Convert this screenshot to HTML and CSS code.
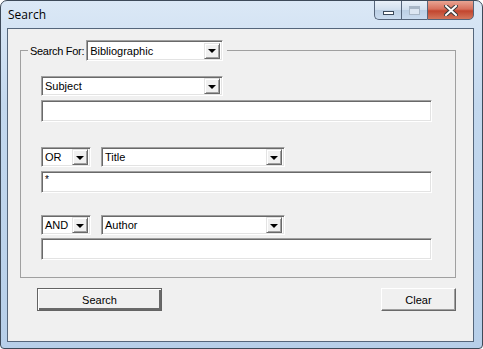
FILE: index.html
```html
<!DOCTYPE html>
<html lang="en">
<head>
    <meta charset="UTF-8">
    <title>Search</title>
    <link rel="stylesheet" href="styles.css">
</head>
<body>
    <div class="window">
        <div class="titlebar">
            <span class="title">Search</span>
            <div class="caption-buttons">
                <div class="cap-btn cap-min"><span class="min-glyph"></span></div>
                <div class="cap-btn cap-max"><span class="max-glyph"></span></div>
                <div class="cap-btn cap-close">
                    <svg width="14" height="11" viewBox="0 0 14 11">
                        <path d="M2 1 L12 10 M12 1 L2 10" stroke="#3b3b3b" stroke-width="4" stroke-linecap="square"/>
                        <path d="M2 1 L12 10 M12 1 L2 10" stroke="#fff" stroke-width="2" stroke-linecap="square"/>
                    </svg>
                </div>
            </div>
        </div>

        <div class="client">
            <div class="group">
                <div class="legend">
                    <span class="legend-label">Search For:</span>
                    <div class="combo combo-bib">
                        <span class="combo-text">Bibliographic</span>
                        <span class="drop-btn"><span class="arrow"></span></span>
                    </div>
                </div>

                <div class="row row-first">
                    <div class="combo combo-field">
                        <span class="combo-text">Subject</span>
                        <span class="drop-btn"><span class="arrow"></span></span>
                    </div>
                </div>
                <div class="textbox"></div>

                <div class="row row-gap">
                    <div class="combo combo-op">
                        <span class="combo-text">OR</span>
                        <span class="drop-btn"><span class="arrow"></span></span>
                    </div>
                    <div class="combo combo-wide">
                        <span class="combo-text">Title</span>
                        <span class="drop-btn"><span class="arrow"></span></span>
                    </div>
                </div>
                <div class="textbox"><span class="textbox-text">*</span></div>

                <div class="row row-gap2">
                    <div class="combo combo-op">
                        <span class="combo-text">AND</span>
                        <span class="drop-btn"><span class="arrow"></span></span>
                    </div>
                    <div class="combo combo-wide">
                        <span class="combo-text">Author</span>
                        <span class="drop-btn"><span class="arrow"></span></span>
                    </div>
                </div>
                <div class="textbox textbox-last"></div>
            </div>

            <div class="actions">
                <button class="btn btn-default">Search</button>
                <button class="btn btn-clear">Clear</button>
            </div>
        </div>
    </div>
</body>
</html>
```

FILE: styles.css
```css
* {
    margin: 0;
    padding: 0;
    box-sizing: border-box;
}

body {
    font-family: "Liberation Sans", Arial, sans-serif;
    font-size: 11px;
    color: #000;
    background: #fff;
}

.window {
    width: 483px;
    height: 349px;
    border: 1px solid #3e4a59;
    border-radius: 7px 7px 4px 4px;
    background: linear-gradient(180deg, #dbe8f6 0%, #c3d8ee 30%, #b7cfe9 100%);
    overflow: hidden;
}

.titlebar {
    height: 27px;
    display: flex;
    justify-content: space-between;
    align-items: flex-start;
}

.title {
    font-family: "Open Sans", "Noto Sans", sans-serif;
    font-size: 12px;
    margin: 5px 0 0 7px;
    color: #000;
}

.caption-buttons {
    display: flex;
    margin-right: 8px;
    margin-top: -1px;
}

.cap-btn {
    height: 20px;
    border: 1px solid #56657a;
    display: flex;
    align-items: center;
    justify-content: center;
}

.cap-min {
    width: 27px;
    border-radius: 0 0 0 5px;
    border-right: none;
    background: linear-gradient(180deg, #e9f0f8 0%, #d1dfee 50%, #bccfe4 51%, #c9dbef 100%);
}

.cap-max {
    width: 26px;
    border-right: none;
    background: linear-gradient(180deg, #e9f0f8 0%, #d1dfee 50%, #bccfe4 51%, #c9dbef 100%);
}

.cap-close {
    width: 47px;
    border-radius: 0 0 5px 0;
    background: linear-gradient(180deg, #e8a493 0%, #d7705c 45%, #c2452e 55%, #d3765c 100%);
}

.min-glyph {
    width: 11px;
    height: 4px;
    margin-top: 5px;
    background: #fff;
    border: 1px solid #3c4a5c;
}

.max-glyph {
    width: 11px;
    height: 9px;
    border: 1px solid #a8b6c6;
    box-shadow: inset 0 2px 0 #a8b6c6;
    background: #dce6f2;
}

.client {
    margin: 0 8px 0 6px;
    height: 314px;
    border: 1px solid #55667b;
    background: #f0f0f0;
}

.group {
    margin: 21px 17px 0 12px;
    border: 1px solid #a0a0a0;
    padding: 0 0 17px 20px;
}

.legend {
    display: flex;
    align-items: center;
    gap: 2px;
    width: max-content;
    height: 21px;
    margin: -11px 0 0 -13px;
    padding: 0 4px 0 2px;
    background: #f0f0f0;
}

.legend-label {
    white-space: nowrap;
    letter-spacing: -0.3px;
}

.combo {
    display: flex;
    align-items: center;
    justify-content: space-between;
    height: 20px;
    background: #fff;
    border: 1px solid;
    border-color: #a0a0a0 #fff #fff #a0a0a0;
    box-shadow: inset 1px 1px 0 #696969, inset -1px -1px 0 #e3e3e3;
    padding: 2px 2px 2px 3px;
}

.combo-bib {
    width: 137px;
    height: 21px;
}

.combo-field {
    width: 182px;
}

.combo-op {
    width: 50px;
}

.combo-wide {
    width: 184px;
}

.combo-text {
    white-space: nowrap;
}

.drop-btn {
    width: 16px;
    height: 16px;
    background: #f0f0f0;
    border: 1px solid;
    border-color: #e3e3e3 #696969 #696969 #e3e3e3;
    box-shadow: inset 1px 1px 0 #fff, inset -1px -1px 0 #a0a0a0;
    display: flex;
    align-items: center;
    justify-content: center;
}

.arrow {
    width: 0;
    height: 0;
    border-left: 4px solid transparent;
    border-right: 4px solid transparent;
    border-top: 4px solid #000;
    margin-top: 1px;
}

.row {
    display: flex;
    gap: 10px;
}

.row-first {
    margin-top: 15px;
}

.row-gap {
    margin-top: 25px;
}

.row-gap2 {
    margin-top: 22px;
}

.textbox {
    width: 391px;
    height: 22px;
    margin-top: 4px;
    background: #fff;
    border: 1px solid;
    border-color: #a0a0a0 #fff #fff #a0a0a0;
    box-shadow: inset 1px 1px 0 #696969, inset -1px -1px 0 #e3e3e3;
    padding: 2px 3px;
    line-height: 11px;
}

.textbox-last {
    margin-top: 3px;
}

.textbox-text {
    font-size: 10px;
}

.actions {
    display: flex;
    justify-content: space-between;
    margin: 10px 17px 0 29px;
}

.btn {
    font-family: "Liberation Sans", Arial, sans-serif;
    font-size: 11px;
    height: 23px;
    background: #f0f0f0;
    border: 1px solid;
    border-color: #fff #696969 #696969 #fff;
    box-shadow: inset -1px -1px 0 #a0a0a0;
    color: #000;
}

.btn-default {
    width: 125px;
    border: 1px solid #646464;
    box-shadow: inset 1px 1px 0 #fff, inset -2px -2px 0 #696969;
}

.btn-clear {
    width: 75px;
}
```
